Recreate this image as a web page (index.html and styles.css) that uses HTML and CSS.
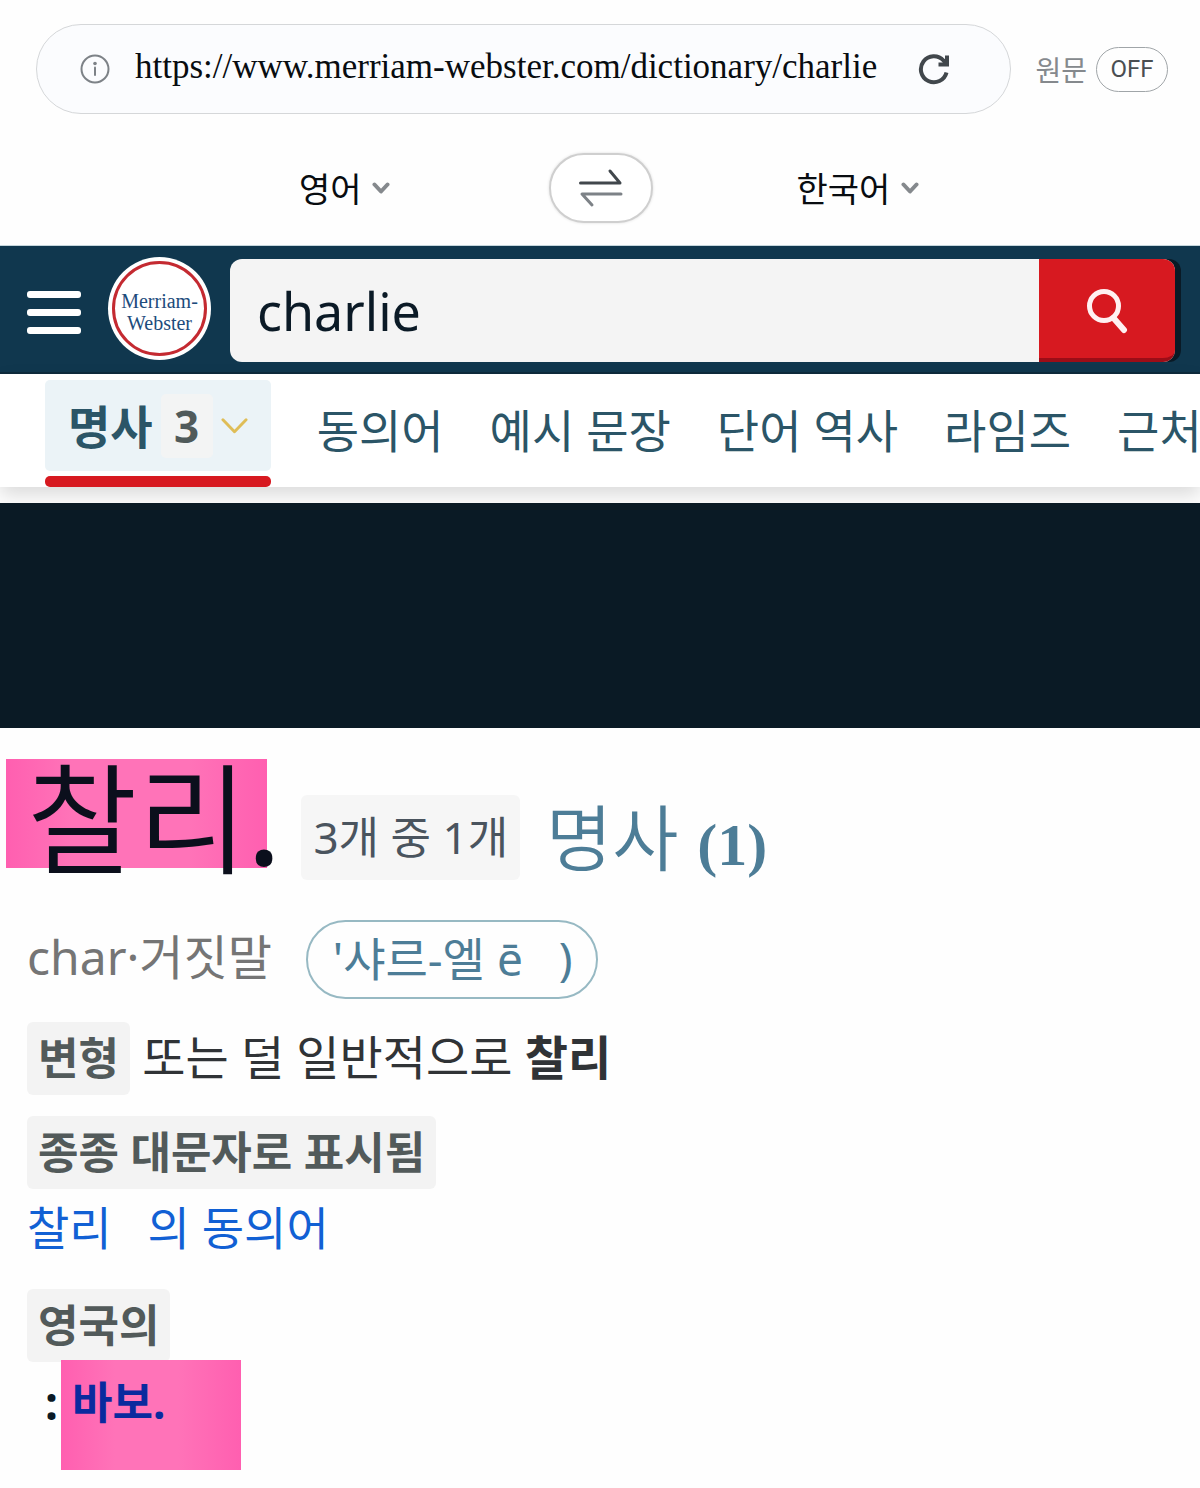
FILE: index.html
```html
<!DOCTYPE html>
<html lang="ko">
<head>
<meta charset="utf-8">
<meta name="viewport" content="width=device-width, initial-scale=1">
<title>charlie</title>
<link rel="stylesheet" href="styles.css">
</head>
<body>
<header class="browser">
  <div class="address-row">
    <div class="address">
      <svg class="info" viewBox="0 0 30 30" aria-hidden="true"><circle cx="15" cy="15" r="13.5"/><path d="M15 13.500v7.500"/><circle class="dot" cx="15" cy="9.500" r="1.800"/></svg>
      <input class="url" type="text" aria-label="URL" value="https://www.merriam-webster.com/dictionary/charlie">
      <button class="icon-button" type="button" aria-label="새로고침">
        <svg class="reload" viewBox="0 0 32 32" aria-hidden="true"><path d="M28.500 19.500A13 13 0 1 1 25.500 7.500L28 10"/><path d="M29 2.500v9h-8.500" stroke-linejoin="miter"/></svg>
      </button>
    </div>
    <label class="original-label" for="original">원문</label>
    <button class="toggle" id="original" type="button">OFF</button>
  </div>
  <div class="language-row">
    <div class="language">
      <select class="language-select" aria-label="원본 언어"><option>영어</option></select>
      <svg class="caret" viewBox="0 0 18 14" aria-hidden="true"><path d="M2.500 3.500L9 10.500L15.500 3.500"/></svg>
    </div>
    <button class="swap" type="button" aria-label="언어 바꾸기">
      <svg viewBox="0 0 44 40" aria-hidden="true"><path class="swap-top" d="M1.500 15H41L31 3"/><path class="swap-bottom" d="M42 26H3L13 37"/></svg>
    </button>
    <div class="language">
      <select class="language-select" aria-label="번역 언어"><option>한국어</option></select>
      <svg class="caret" viewBox="0 0 18 14" aria-hidden="true"><path d="M2.500 3.500L9 10.500L15.500 3.500"/></svg>
    </div>
  </div>
</header>

<div class="masthead">
  <button class="menu" type="button" aria-label="메뉴"><span class="menu-bar"></span><span class="menu-bar"></span><span class="menu-bar"></span></button>
  <a class="logo" href="#"><span class="logo-ring">Merriam-<br>Webster</span></a>
  <form class="search">
    <input class="search-input" type="text" aria-label="검색" value="charlie">
    <button class="search-button" type="button" aria-label="검색">
      <svg viewBox="0 0 42 46" aria-hidden="true"><circle cx="18" cy="18" r="14.500"/><path d="M27.500 30L38 42" stroke-width="6"/></svg>
    </button>
  </form>
</div>

<nav class="tabs">
  <a class="tab-active" href="#noun">
    <span class="tab-box">명사<span class="tab-count">3</span><svg class="tab-caret" viewBox="0 0 28 18" aria-hidden="true"><path d="M2 2.500L14 15L26 2.500"/></svg></span>
    <span class="tab-underline"></span>
  </a>
  <a class="tab" href="#synonyms">동의어</a>
  <a class="tab" href="#examples">예시 문장</a>
  <a class="tab" href="#history">단어 역사</a>
  <a class="tab" href="#rhymes">라임즈</a>
  <a class="tab" href="#nearby">근처</a>
</nav>

<div class="banner"></div>

<main class="entry" id="noun">
  <div class="title-row">
    <h1 class="headword">찰리<span class="stop">.</span></h1>
    <span class="badge position">3개 중 1개</span>
    <h2 class="part">명사 <span class="part-number">(1)</span></h2>
  </div>
  <div class="sound-row">
    <span class="syllables">char·거짓말</span>
    <button class="pronunciation" type="button">'샤르-엘 ē   )</button>
  </div>
  <p class="line"><span class="badge">변형</span> 또는 덜 일반적으로 <strong>찰리</strong></p>
  <p class="line"><span class="badge">종종 대문자로 표시됨</span></p>
  <p class="synonyms"><a href="#synonyms">찰리   의 동의어</a></p>
  <p class="region"><span class="badge">영국의</span></p>
  <p class="definition"><span class="colon">:</span><mark class="meaning">바보.</mark></p>
</main>
</body>
</html>
```

FILE: styles.css
```css
* { box-sizing: border-box; }

body {
  margin: 0;
  background: #fefefe;
  color: #303336;
  font-family: "Noto Sans", "Noto Sans CJK KR", sans-serif;
  font-size: 46px;
  line-height: 72px;
  overflow-x: hidden;
}

button, input, select {
  font: inherit;
  color: inherit;
  border: 0;
  padding: 0;
  margin: 0;
  background: none;
}

svg { display: block; fill: none; stroke-linecap: round; stroke-linejoin: round; }
h1, h2, p { margin: 0; }
a { text-decoration: none; color: inherit; }

/* Browser bar */
.browser {
  padding: 24px 32px 22px 36px;
  border-bottom: 1px solid #c5d6dc;
}

.address-row { display: flex; align-items: center; }

.address {
  flex: 1;
  min-width: 0;
  height: 90px;
  display: flex;
  align-items: center;
  padding: 0 60px 0 43px;
  border: 1px solid #d5d7d9;
  border-radius: 45px;
  background: #fbfcfe;
}

.info { width: 30px; height: 30px; flex: none; stroke: #7d8287; stroke-width: 2; }
.info .dot { fill: #7d8287; stroke: none; }

.url {
  flex: 1;
  min-width: 0;
  height: 60px;
  margin: 0 24px 4px 25px;
  color: #080c10;
  font-family: "Liberation Serif", serif;
  font-size: 35px;
  line-height: 60px;
}

.reload { width: 32px; height: 32px; stroke: #41474c; stroke-width: 4; stroke-linecap: butt; }

.original-label {
  margin: 0 9px 0 24px;
  color: #85898d;
  font-family: "Noto Sans CJK KR", sans-serif;
  font-size: 28px;
  line-height: 44px;
}

.toggle {
  width: 72px;
  height: 45px;
  border: 1px solid #a0a5a8;
  border-radius: 23px;
  color: #4a4e52;
  font-family: Roboto, sans-serif;
  font-size: 24px;
  line-height: 40px;
}

.language-row {
  display: grid;
  grid-template-columns: 1fr 104px 1fr;
  align-items: center;
  padding: 0 104px;
  margin: 39px 2px 0 0;
}

.language { display: flex; justify-content: center; align-items: center; gap: 10px; }

.language-select {
  appearance: none;
  color: #080c10;
  font-family: "Noto Sans CJK KR", sans-serif;
  font-size: 34px;
  line-height: 52px;
}

.caret { width: 18px; height: 14px; stroke: #85898d; stroke-width: 4; }

.swap {
  height: 70px;
  display: grid;
  place-items: center;
  border: 2px solid #cfcfcf;
  border-radius: 35px;
  background: #fff;
  box-shadow: 0 0 3px #ddd;
}

.swap svg { width: 44px; height: 40px; stroke-width: 3; }
.swap-top { stroke: #41474c; }
.swap-bottom { stroke: #7d8287; }

/* Site header */
.masthead {
  display: flex;
  align-items: center;
  padding: 11px 25px 10px 27px;
  background: #10374e;
  border-bottom: 2px solid #0e2a3c;
}

.menu { display: grid; gap: 11px; width: 54px; margin-top: 6px; flex: none; }
.menu-bar { height: 7px; border-radius: 3px; background: #fff; }

.logo {
  flex: none;
  width: 103px;
  height: 103px;
  margin: 0 19px 2px 27px;
  padding: 4px;
  border-radius: 50%;
  background: #fff;
}

.logo-ring {
  display: block;
  height: 100%;
  padding-top: 26px;
  border: 3px solid #c42a31;
  border-radius: 50%;
  color: #1d4c7c;
  font-family: "Liberation Serif", serif;
  font-size: 20px;
  line-height: 22px;
  text-align: center;
}

.search {
  flex: 1;
  min-width: 0;
  height: 103px;
  display: flex;
  margin-top: 2px;
  border-radius: 12px;
  background: #f4f4f4;
  box-shadow: 6px 0 0 #0a1a26;
}

.search-input {
  flex: 1;
  min-width: 0;
  padding: 0 27px;
  color: #0b1a26;
  font-size: 52px;
}

.search-button {
  width: 136px;
  display: grid;
  place-items: center;
  border-bottom: 4px solid #9c0d17;
  border-radius: 0 12px 12px 0;
  background: #d71920;
}

.search-button svg { width: 42px; height: 46px; margin-top: 4px; stroke: #fff0f1; stroke-width: 5; }

/* Section tabs */
.tabs {
  display: flex;
  gap: 46px;
  padding: 6px 0 0 45px;
  background: #fff;
  box-shadow: 0 8px 18px rgba(0, 0, 0, 0.14);
  color: #2b5567;
  white-space: nowrap;
  overflow: hidden;
}

.tab { flex: none; padding-top: 14px; }

.tab-active { flex: none; display: grid; gap: 5px; font-weight: 700; }

.tab-box {
  display: flex;
  align-items: center;
  height: 91px;
  padding: 0 23px;
  border-radius: 5px;
  background: #ebf3f7;
}

.tab-underline { height: 11px; border-radius: 5px; background: #d71920; }

.tab-count {
  width: 52px;
  margin: 0 8px;
  border-radius: 5px;
  background: #f3f4f4;
  color: #505a5a;
  font-size: 44px;
  line-height: 64px;
  text-align: center;
}

.tab-caret { width: 27px; height: 18px; stroke: #dfbd57; stroke-width: 3; }

.banner {
  height: 225px;
  margin-top: 16px;
  background: #0a1a25;
}

/* Dictionary entry */
.entry { padding: 0 27px 17px; }

.title-row { display: flex; align-items: flex-start; padding-top: 31px; }

.headword {
  margin-left: -21px;
  padding-left: 21px;
  background: linear-gradient(90deg, #ff5fb0, #ff73b8 25%, #ff73b8 70%, #ff5fb0) no-repeat 0 0 / 261px 109px;
  color: #0b0f1c;
  font-size: 120px;
  font-weight: 350;
  line-height: 120px;
}

.stop { font-weight: 500; }

.badge {
  display: inline-block;
  padding: 0 11px;
  border-radius: 6px;
  background: #f3f3f3;
  color: #525a5a;
  font-size: 44px;
  font-weight: 700;
  line-height: 73px;
}

.position {
  margin: 36px 26px 0 21px;
  padding: 0 12px;
  background: #f6f6f6;
  color: #4a545e;
  font-weight: 400;
  line-height: 85px;
}

.part {
  margin-top: 36px;
  color: #4d7d97;
  font-size: 72px;
  font-weight: 350;
  line-height: 85px;
}

.part-number { font-family: "Liberation Serif", serif; font-size: 60px; font-weight: 700; }

.sound-row { display: flex; align-items: center; gap: 34px; padding: 32px 0 2px; }
.syllables { padding-bottom: 6px; color: #757575; font-size: 48px; }

.pronunciation {
  height: 79px;
  padding: 0 23px 10px 25px;
  border: 2px solid #97b9c3;
  border-radius: 40px;
  color: #4d7d97;
  white-space: pre;
}

.line { padding-top: 20px; font-size: 47px; }
.synonyms { padding-top: 2px; color: #1160d4; white-space: pre; }
.region { padding-top: 25px; }
.definition { display: flex; margin-top: -2px; padding-left: 18px; color: #0b1a26; font-weight: 700; }
.colon { width: 16px; line-height: 84px; }

.meaning {
  width: 180px;
  height: 110px;
  padding-left: 11px;
  background: linear-gradient(90deg, #ff5fb0, #ff73b8 30%, #ff73b8 65%, #ff5fb0);
  color: #0a2a9e;
  font-size: 44px;
  line-height: 84px;
}
```
